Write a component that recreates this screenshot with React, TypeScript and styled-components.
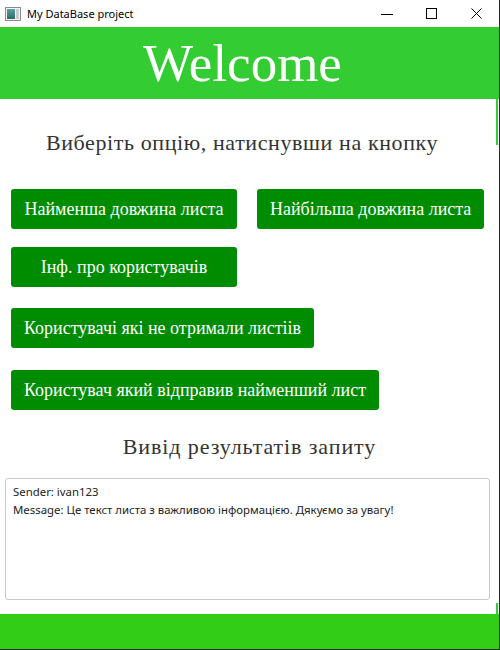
import React from "react";
import styled, { createGlobalStyle } from "styled-components";

const Global = createGlobalStyle`
  html, body { margin: 0; padding: 0; background: #ffffff; }
  * { box-sizing: border-box; }
`;

const Frame = styled.div`
  width: 500px;
  height: 650px;
  display: flex;
  flex-direction: column;
  background: #ffffff;
  border-right: 1px solid #2a2a2a;
  border-bottom: 1px solid #2a2a2a;
  overflow: hidden;
`;

const TitleBar = styled.div`
  height: 27px;
  flex: none;
  display: flex;
  align-items: center;
  padding-left: 5px;
  font-family: "Segoe UI", "Noto Sans", "DejaVu Sans", sans-serif;
  font-size: 11px;
  color: #000;
`;

const TitleText = styled.span`
  margin-left: 6px;
  flex: 1;
`;

const WinButton = styled.div`
  width: 45px;
  height: 27px;
  display: flex;
  align-items: center;
  justify-content: center;
`;

const Header = styled.header`
  height: 72px;
  flex: none;
  background: #33cc33;
  display: flex;
  align-items: center;
  justify-content: center;
  color: #ffffff;
  font-family: "Liberation Serif", "Times New Roman", serif;
  font-size: 53px;
  line-height: 1;
  padding: 0 14px 0 0;
`;

const Content = styled.main`
  flex: 1;
  display: flex;
  flex-direction: column;
`;

const SectionTitle = styled.h2<{ $top: number; $spacing: number; $edge?: boolean }>`
  margin: 0;
  padding-top: ${(p) => p.$top}px;
  padding-right: ${(p) => (p.$edge ? "15px" : "0")};
  font-family: "Liberation Serif", "Times New Roman", serif;
  font-weight: normal;
  font-size: 22px;
  letter-spacing: ${(p) => p.$spacing}px;
  line-height: 26px;
  color: #333333;
  text-align: center;
  background: ${(p) =>
    p.$edge
      ? "linear-gradient(#33cc33, #33cc33) no-repeat right 1px top / 2px 46px"
      : "none"};
`;

const ButtonRow = styled.div<{ $top: number }>`
  display: flex;
  gap: 20px;
  padding-left: 11px;
  margin-top: ${(p) => p.$top}px;
`;

const ActionButton = styled.button`
  min-width: 226px;
  height: 40px;
  padding: 0 13px;
  border: none;
  border-radius: 3px;
  background: #008c00;
  color: #ffffff;
  font-family: "Liberation Serif", "Times New Roman", serif;
  font-size: 18px;
  white-space: nowrap;
  cursor: pointer;
`;

const Output = styled.textarea`
  margin: 18px 0 0 5px;
  width: 485px;
  height: 122px;
  flex: none;
  resize: none;
  overflow: hidden;
  border: 1px solid #c9c9c9;
  border-radius: 3px;
  padding: 4px 7px;
  font-family: "Segoe UI", "Noto Sans", "DejaVu Sans", sans-serif;
  font-size: 11.4px;
  line-height: 18px;
  color: #222222;
  background: #ffffff;
  outline: none;
`;

const Spacer = styled.div`
  flex: 1;
  background: linear-gradient(#33cc33, #33cc33) no-repeat right 1px bottom / 2px 11px;
`;

const Footer = styled.footer`
  height: 35px;
  flex: none;
  background: #32cd16;
`;

const WindowIcon = () => (
  <svg width="16" height="14" viewBox="0 0 16 14">
    <rect x="0.5" y="0.5" width="15" height="13" fill="#f4f4f4" stroke="#8a8a8a" />
    <defs>
      <linearGradient id="ig" x1="0" y1="0" x2="0" y2="1">
        <stop offset="0" stopColor="#5aa0a8" />
        <stop offset="1" stopColor="#2f6b5a" />
      </linearGradient>
    </defs>
    <rect x="2" y="2" width="8" height="10" fill="url(#ig)" />
    <rect x="11" y="2" width="3" height="10" fill="#c8ccd0" />
  </svg>
);

const buttons = [
  { top: 33, items: ["Найменша довжина листа", "Найбільша довжина листа"] },
  { top: 18, items: ["Інф. про користувачів"] },
  { top: 21, items: ["Користувачі які не отримали листіів"] },
  { top: 22, items: ["Користувач який відправив найменший лист"] },
];

export default function App() {
  return (
    <>
      <Global />
      <Frame>
        <TitleBar>
          <WindowIcon />
          <TitleText>My DataBase project</TitleText>
          <WinButton>
            <svg width="12" height="12" viewBox="0 0 12 12">
              <line x1="0" y1="6.5" x2="12" y2="6.5" stroke="#000" strokeWidth="1" />
            </svg>
          </WinButton>
          <WinButton>
            <svg width="12" height="12" viewBox="0 0 12 12">
              <rect x="0.5" y="0.5" width="10" height="10" fill="none" stroke="#000" strokeWidth="1" />
            </svg>
          </WinButton>
          <WinButton>
            <svg width="12" height="12" viewBox="0 0 12 12">
              <path d="M0.5 0.5 L10.5 10.5 M10.5 0.5 L0.5 10.5" stroke="#000" strokeWidth="1" />
            </svg>
          </WinButton>
        </TitleBar>
        <Header>Welcome</Header>
        <Content>
          <SectionTitle $top={31} $spacing={0.6} $edge>
            Виберіть опцію, натиснувши на кнопку
          </SectionTitle>
          {buttons.map((row, i) => (
            <ButtonRow key={i} $top={row.top}>
              {row.items.map((label) => (
                <ActionButton key={label}>{label}</ActionButton>
              ))}
            </ButtonRow>
          ))}
          <SectionTitle $top={24} $spacing={0.9}>
            Вивід результатів запиту
          </SectionTitle>
          <Output
            readOnly
            value={
              "Sender: ivan123\nMessage: Це текст листа з важливою інформацією. Дякуємо за увагу!"
            }
          />
          <Spacer />
        </Content>
        <Footer />
      </Frame>
    </>
  );
}
